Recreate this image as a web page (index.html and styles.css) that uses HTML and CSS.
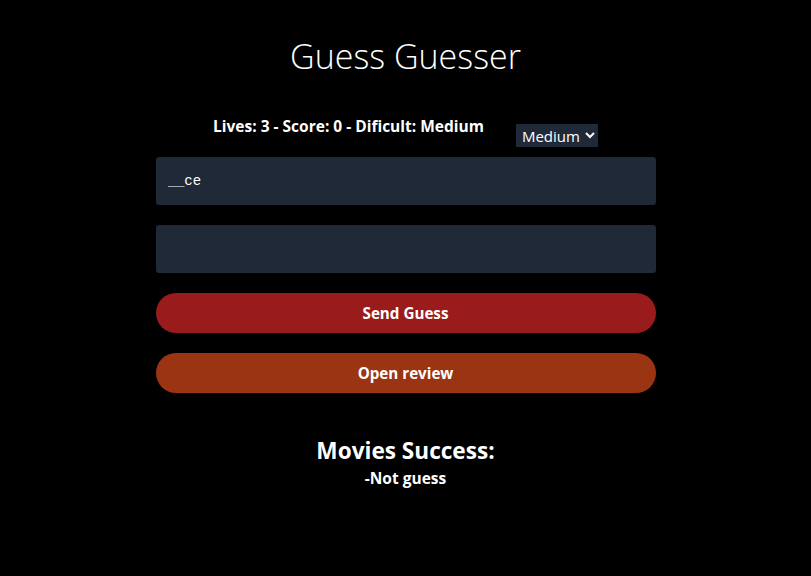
FILE: index.html
```html
<!DOCTYPE html>
<html>
<head>
<meta charset="utf-8">
<link rel="stylesheet" href="styles.css">
</head>
<body>
<main class="app">
  <h1 class="title">Guess Guesser</h1>
  <div class="stats">
    <p class="stats-text">Lives: 3 - Score: 0 - Dificult: Medium</p>
    <select class="difficulty">
      <option>Easy</option>
      <option selected>Medium</option>
      <option>Hard</option>
    </select>
  </div>
  <div class="form">
    <input class="field mono" type="text" value="__ce" readonly>
    <input class="field" type="text">
    <button class="btn btn-send">Send Guess</button>
    <button class="btn btn-review">Open review</button>
  </div>
  <section class="success">
    <h2 class="success-title">Movies Success:</h2>
    <p class="success-item">-Not guess</p>
  </section>
</main>
</body>
</html>
```
FILE: styles.css
```css
* { box-sizing: border-box; }
html, body {
  margin: 0;
  background: #000;
  color: #fff;
  font-family: "Open Sans", "Noto Sans", sans-serif;
}
.app {
  display: flex;
  flex-direction: column;
  align-items: center;
  padding-top: 34px;
}
.title {
  margin: 0;
  font-size: 34px;
  font-weight: 300;
  line-height: 44px;
}
.stats {
  display: flex;
  align-items: flex-start;
  gap: 32px;
  margin-top: 37px;
}
.stats-text {
  margin: 0;
  font-size: 15.5px;
  font-weight: 700;
  line-height: 22px;
}
.difficulty {
  margin-top: 9px;
  background: #1f2937;
  color: #fff;
  border: none;
  font-family: inherit;
  font-size: 15px;
  height: 23px;
  padding: 0 2px;
}
.form {
  width: 500px;
  display: flex;
  flex-direction: column;
  gap: 20px;
  margin-top: 10px;
}
.field {
  height: 48px;
  background: #1f2937;
  border: none;
  border-radius: 3px;
  color: #fff;
  padding: 0 12px;
  font-size: 15px;
  outline: none;
}
.mono { font-family: "Liberation Mono", monospace; font-size: 14px; }
.btn {
  height: 40px;
  border: none;
  border-radius: 20px;
  color: #fff;
  font-family: inherit;
  font-weight: 700;
  font-size: 15.2px;
}
.btn-send { background: #991b1b; }
.btn-review { background: #9a3412; }
.success {
  margin-top: 43px;
  text-align: center;
}
.success-title {
  margin: 0;
  font-size: 22.6px;
  font-weight: 700;
  line-height: 30px;
}
.success-item {
  margin: 1px 0 0;
  font-size: 15.5px;
  font-weight: 700;
  line-height: 22px;
}
```
